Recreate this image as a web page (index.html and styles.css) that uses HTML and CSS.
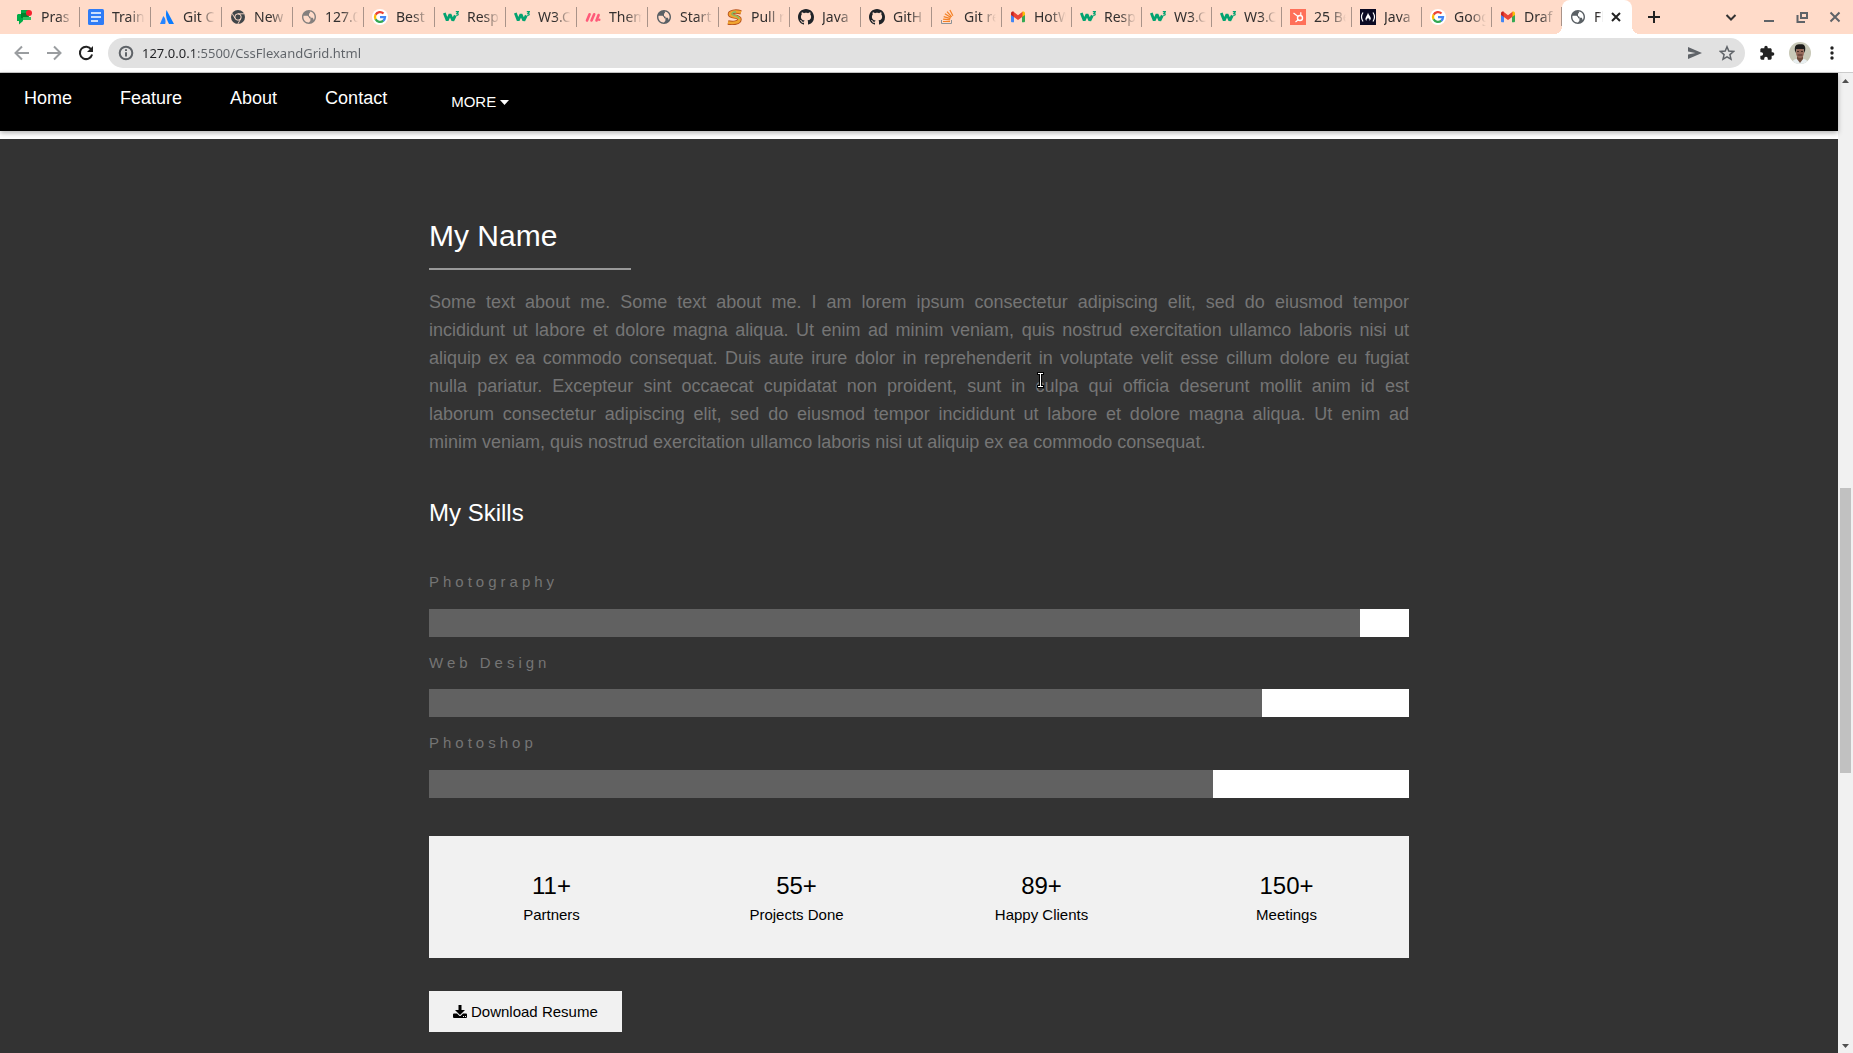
FILE: index.html
```html
<!DOCTYPE html>
<html lang="en">
<head>
<meta charset="utf-8">
<title>Flex and Grid</title>
<link rel="stylesheet" href="styles.css">
</head>
<body>
<svg class="sprite" aria-hidden="true">
  <symbol id="chat" viewBox="0 0 16 16"><path fill="#00ac47" d="M4 1h8v10H6v1l-4 3.500V12H0V6l1-1h3z"/><path fill="#00832d" d="M4 4h7v5H4z"/><path fill="#31c15f" d="M6 8h8v3H6z"/><circle cx="12" cy="4" r="3" fill="#f5222d"/></symbol>
  <symbol id="docs" viewBox="0 0 16 16"><rect width="16" height="16" rx="1.500" fill="#2f7cf6"/><path stroke="#fff" stroke-width="1.600" d="M3 4h10M3 8h10M3 12h7"/></symbol>
  <symbol id="atlas" viewBox="0 0 16 16"><path fill="#0a7cff" d="M7.500 1 15 15h-5C8 11 6 7 7.500 1z"/><path fill="#2684ff" d="M4.300 7C6.500 9 7 12 6.200 15H1z"/></symbol>
  <symbol id="chrome" viewBox="0 0 16 16"><circle cx="8" cy="8" r="7" fill="#414549"/><circle cx="8" cy="8" r="3.200" fill="none" stroke="#ffdbc9" stroke-width="1"/><path stroke="#ffdbc9" stroke-width=".9" d="M8 4.800h6.300M5.200 9.500 2 4.300M10.800 9.600 7.800 15"/></symbol>
  <symbol id="globe" viewBox="2 2 20 20"><path fill="currentColor" d="M12 2C6.480 2 2 6.480 2 12s4.480 10 10 10 10-4.480 10-10S17.520 2 12 2zm-1 17.930c-3.950-.49-7-3.850-7-7.930 0-.62.080-1.210.21-1.790H10l2 2v1.500h2v3c0 1.500-1 2-2 3zM12 9V7.500l1.500-1.500L13 4.200c4 .3 7 3.800 7 7.800 0 1.500-.5 3-1.200 4.200L17.500 13h-3l-1-2H12z"/></symbol>
  <symbol id="google" viewBox="0 0 16 16"><circle cx="8" cy="8" r="8" fill="#fff"/><g fill="none" stroke-width="2.300"><path stroke="#ea4335" d="M3.600 5.700A5 5 0 0 1 11.500 4.500"/><path stroke="#fbbc05" d="M3.600 10.400a5 5 0 0 1 0-4.800"/><path stroke="#34a853" d="M11.300 11.700a5 5 0 0 1-7.700-1.400"/><path stroke="#4285f4" d="M8 8.200h5a5 5 0 0 1-1.800 3.600"/></g></symbol>
  <symbol id="wthree" viewBox="0 0 16 16"><path fill="none" stroke="#04a370" stroke-width="2.800" stroke-linejoin="bevel" d="M1.300 4 4.200 11.500 7 5.200 9.800 11.500l2.500-5"/><path fill="none" stroke="#04a370" stroke-width="1.200" d="M12.800 2.700h2.600l-1.400 1.600c2 0 1.400 2.500-1 1.800"/></symbol>
  <symbol id="monday" viewBox="0 0 16 16"><path stroke="#ff5a79" stroke-width="2.600" stroke-linecap="round" fill="none" d="M2 11.500 4.600 5.300M6.500 11.500 9.200 5.300M11.500 11.500 13.600 6"/><circle cx="14.200" cy="10.800" r="1.300" fill="#ff5a79"/></symbol>
  <symbol id="snake" viewBox="0 0 16 16"><path fill="none" stroke="#b9541d" stroke-width="4.400" d="M14 3.300C8 1.500 2.500 3 3 5.500s9.500 1.300 9.500 4.800S6 14.500 1 13.500"/><path fill="none" stroke="#f0a530" stroke-width="2.600" d="M14 3.300C8 1.500 2.500 3 3 5.500s9.500 1.300 9.500 4.800S6 14.500 1 13.500"/><path fill="none" stroke="#7fbf6a" stroke-width="1.300" d="M9 3C5 3 4 5 6 6s6 1 6 4"/></symbol>
  <symbol id="github" viewBox="0 0 16 16"><path fill="currentColor" d="M8 0C3.580 0 0 3.580 0 8c0 3.540 2.290 6.530 5.470 7.590.4.070.55-.17.55-.38 0-.19-.01-.82-.01-1.490-2.010.37-2.530-.49-2.690-.94-.09-.23-.48-.94-.82-1.130-.28-.15-.68-.52-.01-.53.63-.01 1.080.58 1.230.82.72 1.210 1.870.87 2.330.66.070-.52.28-.87.51-1.070-1.780-.2-3.640-.89-3.640-3.950 0-.87.31-1.590.82-2.150-.08-.2-.36-1.020.08-2.120 0 0 .67-.21 2.200.82.64-.18 1.320-.27 2-.27s1.360.09 2 .27c1.530-1.040 2.200-.82 2.200-.82.44 1.100.16 1.920.08 2.120.51.56.82 1.270.82 2.150 0 3.070-1.870 3.750-3.650 3.950.29.25.54.73.54 1.480 0 1.070-.01 1.930-.01 2.200 0 .21.15.46.55.38A8.010 8.010 0 0 0 16 8c0-4.420-3.580-8-8-8z"/></symbol>
  <symbol id="stack" viewBox="0 0 16 16"><path fill="none" stroke="#8c9296" d="M1.500 11v3.500h10V11"/><path fill="none" stroke="#f48024" stroke-width="1.200" d="M3 12.500h7M3.100 10.100l7 .8M3.700 7.600l6.700 2M4.900 4.800l6 3.600M7 2.600l4.700 5.200M9.900 1l3 5.800"/></symbol>
  <symbol id="gmail" viewBox="0 0 16 16"><path fill="#4285f4" d="M1 5h3v8.300H2a1 1 0 0 1-1-1z"/><path fill="#34a853" d="M12 5h3v7.300a1 1 0 0 1-1 1h-2z"/><path fill="#c5221f" d="M1 4.500C1 2.500 3 2.200 4 3v5L1 6z"/><path fill="#fbbc04" d="M15 4.500c0-2-2-2.300-3-1.500v5l3-2z"/><path fill="#ea4335" d="m3.500 2.700 4.500 3.500 4.500-3.500V7.700L8 11 3.500 7.700z"/></symbol>
  <symbol id="hub" viewBox="0 0 16 16"><path fill="#ff7059" d="M0 0h16v16H0z"/><circle cx="10" cy="9" r="2.500" fill="none" stroke="#fff" stroke-width="1.400"/><path stroke="#fff" stroke-width="1.200" d="M3.500 4 8 7.500M10.800 3.300v3.500M8.200 10.800 5.500 13"/></symbol>
  <symbol id="camp" viewBox="0 0 16 16"><path fill="#0a0a23" d="M0 0h16v16H0z"/><path fill="none" stroke="#fff" stroke-width="1.200" d="M3 3.500Q0 8 3 12.500M13 3.500q3 4.500 0 9"/><path fill="#fff" d="M8 3.500c.5 3 3 3.500 2.800 6.500L9.500 12c.6-2-1-2-1.500-3.500C7.700 10 6 10 6.500 12 3.500 9.500 7.500 7 8 3.500z"/></symbol>
</svg>

<header class="browser">
  <div class="tabstrip">
    <nav class="tabs" aria-label="Tabs">
      <button class="tab"><svg class="favicon"><use href="#chat"/></svg><span>Pras</span></button>
      <button class="tab"><svg class="favicon"><use href="#docs"/></svg><span>Train</span></button>
      <button class="tab"><svg class="favicon"><use href="#atlas"/></svg><span>Git C</span></button>
      <button class="tab"><svg class="favicon"><use href="#chrome"/></svg><span>New</span></button>
      <button class="tab"><svg class="favicon globe faded"><use href="#globe"/></svg><span>127.0</span></button>
      <button class="tab"><svg class="favicon"><use href="#google"/></svg><span>Best</span></button>
      <button class="tab"><svg class="favicon"><use href="#wthree"/></svg><span>Resp</span></button>
      <button class="tab"><svg class="favicon"><use href="#wthree"/></svg><span>W3.C</span></button>
      <button class="tab"><svg class="favicon"><use href="#monday"/></svg><span>Them</span></button>
      <button class="tab"><svg class="favicon globe"><use href="#globe"/></svg><span>Start</span></button>
      <button class="tab"><svg class="favicon"><use href="#snake"/></svg><span>Pull r</span></button>
      <button class="tab"><svg class="favicon"><use href="#github"/></svg><span>Java</span></button>
      <button class="tab"><svg class="favicon"><use href="#github"/></svg><span>GitH</span></button>
      <button class="tab narrow"><svg class="favicon"><use href="#stack"/></svg><span>Git re</span></button>
      <button class="tab narrow"><svg class="favicon"><use href="#gmail"/></svg><span>HotW</span></button>
      <button class="tab narrow"><svg class="favicon"><use href="#wthree"/></svg><span>Resp</span></button>
      <button class="tab narrow"><svg class="favicon"><use href="#wthree"/></svg><span>W3.C</span></button>
      <button class="tab narrow"><svg class="favicon"><use href="#wthree"/></svg><span>W3.C</span></button>
      <button class="tab narrow"><svg class="favicon"><use href="#hub"/></svg><span>25 Be</span></button>
      <button class="tab narrow"><svg class="favicon"><use href="#camp"/></svg><span>Java</span></button>
      <button class="tab narrow"><svg class="favicon"><use href="#google"/></svg><span>Goog</span></button>
      <button class="tab narrow"><svg class="favicon"><use href="#gmail"/></svg><span>Draf</span></button>
      <button class="tab narrow active"><svg class="favicon globe"><use href="#globe"/></svg><span>Fl</span><svg class="close" viewBox="0 0 10 10"><path d="m1 1 8 8M9 1 1 9"/></svg></button>
    </nav>
    <button class="icon-button new-tab" aria-label="New tab"><svg viewBox="0 0 12 12"><path d="M6 0v12M0 6h12"/></svg></button>
    <div class="window-controls">
      <button class="icon-button" aria-label="Search tabs"><svg viewBox="0 0 12 12"><path class="dark" d="m1.500 4 4.500 4.500L10.500 4"/></svg></button>
      <button class="icon-button" aria-label="Minimize"><svg viewBox="0 0 12 12"><path d="M1 10h10"/></svg></button>
      <button class="icon-button" aria-label="Restore"><svg viewBox="0 0 12 12"><path d="M5 2h6v5H5zM1.500 4v7H9"/></svg></button>
      <button class="icon-button" aria-label="Close window"><svg viewBox="0 0 12 12"><path d="m1.500 1.500 9 9M10.500 1.500l-9 9"/></svg></button>
    </div>
  </div>

  <div class="toolbar">
    <div class="history">
      <button class="icon-button" aria-label="Back"><svg viewBox="0 0 16 16"><path d="M15 8H2M8 1.500 1.500 8 8 14.500"/></svg></button>
      <button class="icon-button" aria-label="Forward"><svg viewBox="0 0 16 16"><path d="M1 8h13M8 1.500 14.500 8 8 14.500"/></svg></button>
      <button class="icon-button reload" aria-label="Reload"><svg viewBox="0 0 16 16"><path d="M13.300 4.500A6.200 6.200 0 1 0 14.100 9.500"/><path class="solid" d="M15 1v6H9z"/></svg></button>
    </div>
    <div class="omnibox">
      <svg class="info" viewBox="0 0 16 16"><circle cx="8" cy="8" r="6.300"/><path d="M8 7.200v4.300M8 4.300v1.700"/></svg>
      <input class="url" type="text" aria-label="Address" value="127.0.0.1:5500/CssFlexandGrid.html">
      <button class="icon-button" aria-label="Share"><svg viewBox="0 0 16 16"><path class="solid" d="M1 2 15 8 1 14V9.500L8.500 8 1 6.500z"/></svg></button>
      <button class="icon-button" aria-label="Bookmark"><svg viewBox="0 0 16 16"><path class="thin" d="m8 1.800 1.800 4.300 4.700.4-3.600 3.100 1.100 4.600L8 11.800l-4 2.400 1.100-4.600L1.500 6.500l4.700-.4z"/></svg></button>
    </div>
    <button class="icon-button puzzle" aria-label="Extensions"><svg viewBox="0 0 24 24"><path class="solid" d="M20.500 11H19V7c0-1.100-.9-2-2-2h-4V3.500a2.500 2.500 0 0 0-5 0V5H4c-1.100 0-2 .9-2 2v3.800h1.500a2.700 2.700 0 0 1 0 5.400H2V20c0 1.100.9 2 2 2h3.800v-1.500a2.700 2.700 0 0 1 5.400 0V22H17c1.100 0 2-.9 2-2v-4h1.500a2.500 2.500 0 0 0 0-5z"/></svg></button>
    <button class="avatar" aria-label="Profile"><svg viewBox="0 0 22 22"><path fill="#c9c9b8" d="M0 0h22v22H0z"/><path fill="#e8eef0" d="M3 22c0-4 3-5 5-5l3 2 3-2c2 0 5 1 5 5z"/><path fill="#6e4a3a" d="M8 13h6v4l-3 4-3-4z"/><ellipse cx="11" cy="10.500" rx="4" ry="5.500" fill="#96695a"/><path fill="#1e1c1b" d="M6.300 11C4.500 2 8 2.500 11 2.200c4-.2 6.500 1 4.700 8.800L14.500 7h-7z"/><path stroke="#4a2e26" d="M8.500 13h5M8 9.500h2M12 9.500h2"/></svg></button>
    <button class="icon-button menu" aria-label="Menu"><svg viewBox="0 0 16 16"><circle cx="8" cy="3" r="1.700"/><circle cx="8" cy="8" r="1.700"/><circle cx="8" cy="13" r="1.700"/></svg></button>
  </div>
</header>

<div class="viewport">
  <div class="page">
    <nav class="site-nav">
      <a href="#">Home</a>
      <a href="#">Feature</a>
      <a href="#">About</a>
      <a href="#">Contact</a>
      <button class="more">MORE <svg viewBox="0 0 9 5"><path d="M0 0h9L4.500 5z"/></svg></button>
    </nav>

    <main class="about">
      <div class="content">
        <h2>My Name</h2>
        <hr>
        <div class="bio">
          <p>Some text about me. Some text about me. I am lorem ipsum consectetur adipiscing elit, sed do eiusmod tempor<br>
          incididunt ut labore et dolore magna aliqua. Ut enim ad minim veniam, quis nostrud exercitation ullamco laboris nisi ut<br>
          aliquip ex ea commodo consequat. Duis aute irure dolor in reprehenderit in voluptate velit esse cillum dolore eu fugiat<br>
          nulla pariatur. Excepteur sint occaecat cupidatat non proident, sunt in culpa qui officia deserunt mollit anim id est<br>
          laborum consectetur adipiscing elit, sed do eiusmod tempor incididunt ut labore et dolore magna aliqua. Ut enim ad
          <span class="last-line">minim veniam, quis nostrud exercitation ullamco laboris nisi ut aliquip ex ea commodo consequat.</span></p>
          <svg class="cursor" viewBox="0 0 7 16"><path class="edge" d="M0 1.500h7M0 14.500h7M3.500 1v14"/><path d="M1 1.500h5M1 14.500h5M3.500 1v14"/></svg>
        </div>
        <h3>My Skills</h3>
        <p class="skill">Photography</p>
        <div class="bar"><div class="fill" style="width:95%"></div></div>
        <p class="skill">Web Design</p>
        <div class="bar"><div class="fill" style="width:85%"></div></div>
        <p class="skill">Photoshop</p>
        <div class="bar"><div class="fill" style="width:80%"></div></div>

        <div class="stats">
          <div><strong>11+</strong><span>Partners</span></div>
          <div><strong>55+</strong><span>Projects Done</span></div>
          <div><strong>89+</strong><span>Happy Clients</span></div>
          <div><strong>150+</strong><span>Meetings</span></div>
        </div>
        <button class="download"><svg viewBox="0 0 14 14"><path d="M5.500 0h3v5H12L7 10 2 5h3.500z"/><path fill-rule="evenodd" d="M1 8.500h3l2 2q1 1 2 0l2-2h3q1 0 1 1V12q0 1-1 1H1q-1 0-1-1V9.500q0-1 1-1zM10 11v1h1v-1zm2 0v1h1v-1z"/></svg> Download Resume</button>
      </div>
    </main>
  </div>

  <div class="scrollbar" aria-hidden="true">
    <svg viewBox="0 0 15 15"><path d="M4 10h7L7.500 6z"/></svg>
    <div class="track"><div class="thumb"></div></div>
    <svg viewBox="0 0 15 15"><path d="M4 6h7L7.500 10z"/></svg>
  </div>
</div>
</body>
</html>
```
FILE: styles.css
```css
* { box-sizing: border-box; }

body {
  display: flex;
  flex-direction: column;
  min-height: 100vh;
  margin: 0;
  font: 15px/1.5 "Liberation Sans", Arial, sans-serif;
}

button {
  padding: 0;
  border: 0;
  background: none;
  font: inherit;
  color: inherit;
}

svg { display: block; }

.sprite {
  position: absolute;
  width: 0;
  height: 0;
}

/* Browser frame */

.tabstrip {
  display: flex;
  align-items: center;
  height: 34px;
  padding-left: 9px;
  background: #ffdbc9;
}

.tabs {
  display: flex;
  flex: 0 1 1623px;
  min-width: 0;
  height: 34px;
}

.tab {
  display: flex;
  align-items: center;
  flex: 0 1 71px;
  min-width: 0;
  padding: 0 6px 0 8px;
  gap: 8px;
  font: 14px/20px "Noto Sans", sans-serif;
  color: #33302f;
  background: linear-gradient(#a99389, #a99389) right center / 1px 20px no-repeat;
}

.tab.narrow { flex-basis: 70px; }

.tab span {
  flex: 1;
  overflow: hidden;
  text-align: left;
  white-space: nowrap;
  mask-image: linear-gradient(to right, #000 50%, transparent);
}

.favicon {
  flex: none;
  width: 16px;
  height: 16px;
  color: #1f2328;
}

.favicon.globe {
  padding: 1px;
  color: #5a6065;
}

.favicon.faded { color: #85807e; }

.tab.active {
  position: relative;
  background: #fff;
  border-radius: 8px 8px 0 0;
}

.tab.active::before,
.tab.active::after {
  content: "";
  position: absolute;
  bottom: 0;
  width: 8px;
  height: 8px;
}

.tab.active::before {
  right: 100%;
  background: radial-gradient(circle at 0 0, #ffdbc9 8px, #fff 8px);
}

.tab.active::after {
  left: 100%;
  background: radial-gradient(circle at 100% 0, #ffdbc9 8px, #fff 8px);
}

.close {
  flex: none;
  width: 10px;
  height: 10px;
  margin-right: 5px;
  stroke: #222;
  stroke-width: 2;
}

.icon-button {
  display: flex;
  flex: none;
  fill: none;
  stroke: #5f6368;
  stroke-width: 2;
}

.icon-button svg {
  width: 16px;
  height: 16px;
}

.icon-button .solid {
  fill: #5f6368;
  stroke: none;
}

.icon-button .thin { stroke-width: 1.5; }

.new-tab { margin-left: 16px; stroke: #222; }

.new-tab svg,
.window-controls svg {
  width: 12px;
  height: 12px;
}

.window-controls {
  display: flex;
  gap: 21px;
  margin-left: auto;
  padding-right: 12px;
}

.window-controls button:first-child { margin-right: 5px; }
.window-controls .dark { stroke: #333; }

.toolbar {
  display: flex;
  align-items: center;
  height: 39px;
  padding: 0 13px;
  border-bottom: 1px solid #ccc;
  background: #fff;
}

.history {
  display: flex;
  gap: 16px;
  padding: 0 14px 0 1px;
}

.history .icon-button { stroke: #9a9da0; }
.history .reload { stroke: #222; }
.history .reload .solid { fill: #222; }

.omnibox {
  display: flex;
  align-items: center;
  flex: 1;
  height: 30px;
  padding: 0 10px;
  border-radius: 15px;
  background: #e1e1e1;
}

.info {
  width: 16px;
  height: 16px;
  fill: none;
  stroke: #5f6368;
  stroke-width: 2;
}

.url {
  flex: 1;
  min-width: 0;
  height: 30px;
  padding: 0 0 0 8px;
  border: 0;
  outline: 0;
  font: 13px "Noto Sans", sans-serif;
  color: transparent;
  background: linear-gradient(to right, #202124 60px, #5f6368 60px);
  background-clip: text;
}

.omnibox .icon-button + .icon-button { margin-left: 16px; }
.puzzle { margin-left: 14px; }
.puzzle .solid { fill: #222; }

.avatar {
  overflow: hidden;
  width: 22px;
  height: 22px;
  margin: 0 13px 0 14px;
  border-radius: 50%;
}

.menu {
  fill: #222;
  stroke: none;
}

/* Page shown in the frame */

.viewport {
  display: flex;
  flex: 1;
}

.page {
  display: flex;
  flex-direction: column;
  flex: 1;
  min-width: 0;
}

.site-nav {
  position: relative;
  display: flex;
  align-items: flex-start;
  height: 58px;
  margin-bottom: 8px;
  padding-top: 12px;
  background: #000;
  color: #fff;
  box-shadow: 0 2px 5px rgba(0, 0, 0, .3);
}

.site-nav a {
  padding: 0 24px;
  font-size: 18px;
  color: inherit;
  text-decoration: none;
}

.more {
  display: flex;
  align-items: center;
  gap: 4px;
  margin-left: 16px;
  padding: 6px 24px 0;
}

.more svg {
  width: 9px;
  height: 5px;
  fill: #fff;
}

.about {
  flex: 1;
  padding: 64px 16px 21px;
  background: #333;
}

.content {
  max-width: 980px;
  margin: 0 auto;
}

h2, h3 {
  margin: 10px 0;
  font-weight: 400;
  color: #fff;
}

h2 { font-size: 30px; }
h3 { font-size: 24px; }

hr {
  width: 202px;
  height: 2px;
  margin: 10px 0 18px;
  border: 0;
  background: #999;
}

.bio {
  position: relative;
  font-size: 18px;
  line-height: 28px;
  color: #757575;
}

.bio p {
  margin: 0 0 39px;
  text-align: justify;
  text-align-last: justify;
}

.last-line {
  display: block;
  text-align-last: left;
}

@media (max-width: 1020px) {
  .bio br { display: none; }
  .bio p { text-align-last: left; }
  .last-line { display: inline; }
}

.cursor {
  position: absolute;
  top: 84px;
  left: 608px;
  width: 7px;
  height: 16px;
  stroke: #fff;
}

.cursor .edge {
  stroke: #000;
  stroke-width: 3;
}

.skill {
  margin: 15px 0;
  letter-spacing: 4px;
  color: #757575;
}

h3 + .skill { margin-top: 40px; }

.bar { background: #fff; }

.fill {
  height: 28px;
  background: #616161;
}

.stats {
  display: grid;
  grid-template-columns: repeat(4, 1fr);
  margin: 38px 0 33px;
  padding: 32px 0;
  background: #f1f1f1;
  color: #000;
  text-align: center;
}

.stats strong,
.stats span { display: block; }

.stats strong {
  font-size: 24px;
  font-weight: 400;
}

.download {
  display: flex;
  align-items: center;
  gap: 4px;
  height: 41px;
  padding: 1px 24px 0;
  background: #f1f1f1;
  color: #000;
}

.download svg {
  width: 14px;
  height: 14px;
}

.scrollbar {
  display: flex;
  flex-direction: column;
  flex: none;
  width: 15px;
  background: #f1f1f1;
  fill: #505050;
}

.scrollbar svg {
  flex: none;
  width: 15px;
  height: 15px;
}

.track {
  display: grid;
  grid-template-rows: 400fr 285fr 265fr;
  flex: 1;
  padding: 0 2px;
}

.thumb {
  grid-row: 2;
  background: #c1c1c1;
}
```
